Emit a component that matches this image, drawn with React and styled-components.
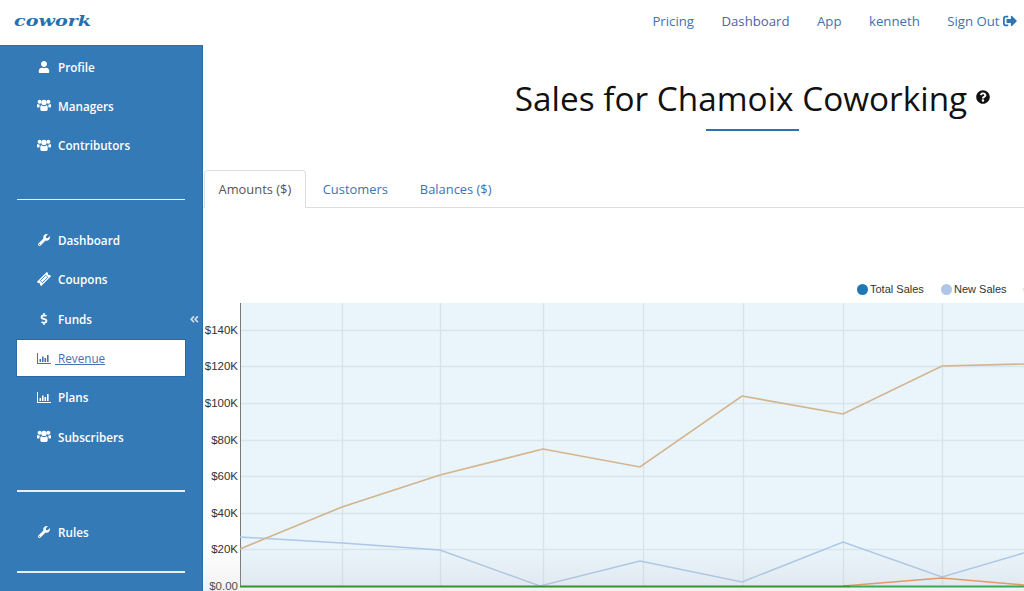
import React from "react";
import styled, { createGlobalStyle } from "styled-components";
import { FaUser, FaWrench, FaDollarSign, FaAngleDoubleLeft, FaQuestionCircle, FaSignOutAlt } from "react-icons/fa";

const Global = createGlobalStyle`
  html, body { margin: 0; padding: 0; background: #fff; height: 100%; overflow: hidden; }
  body { font-family: "Open Sans", "Liberation Sans", sans-serif; }
  #root { height: 100%; }
`;

const Page = styled.div`
  position: relative;
  width: 1024px;
  height: 591px;
  overflow: hidden;
  display: flex;
  flex-direction: column;
`;

const TopBar = styled.header`
  flex: 0 0 45px;
  display: flex;
  align-items: center;
  justify-content: space-between;
  padding: 0 7px 4px 14px;
  box-sizing: border-box;
`;

const Logo = styled.a`
  font-family: "DejaVu Serif", serif;
  font-weight: 700;
  font-style: italic;
  font-size: 14.5px;
  color: #256fb2;
  transform: scaleX(1.32);
  transform-origin: left center;
`;

const TopNav = styled.nav`
  display: flex;
  align-items: center;
  gap: 27.5px;
`;

const TopLink = styled.a`
  display: inline-flex;
  align-items: center;
  gap: 3.5px;
  font-size: 13.2px;
  color: ${(p) => (p.$visited ? "#56609f" : "#3e72b0")};
`;

const Body = styled.div`
  flex: 1;
  display: flex;
  min-height: 0;
`;

const Sidebar = styled.aside`
  position: relative;
  flex: 0 0 203px;
  box-sizing: border-box;
  background: #337ab7;
  border-right: 1px solid #2c6ca5;
  border-top: 1px solid #2e70aa;
  padding: 1px 17px 0;
`;

const Item = styled.a`
  height: ${(p) => (p.$active ? "36px" : "39.33px")};
  margin: ${(p) => (p.$active ? "1.6px 0" : "0")};
  box-sizing: border-box;
  display: flex;
  align-items: center;
  gap: ${(p) => (p.$active ? "4px" : "7px")};
  padding-left: 19px;
  font-size: 11.7px;
  font-weight: 600;
  color: ${(p) => (p.$active ? "#4a6fae" : "#fff")};
  background: ${(p) => (p.$active ? "#fff" : "transparent")};
  outline: ${(p) => (p.$active ? "1px solid #2a69a6" : "none")};
`;

const Label = styled.span`
  font-weight: ${(p) => (p.$active ? 400 : 600)};
  text-decoration: ${(p) => (p.$active ? "underline" : "none")};
  white-space: pre;
`;

const IconSlot = styled.span`
  flex: 0 0 15px;
  display: flex;
  align-items: center;
  justify-content: center;
  font-size: 12px;
`;

const Divider = styled.hr`
  border: 0;
  height: 1.5px;
  background: #e6eef6;
  margin: ${(p) => p.$top}px 0 ${(p) => p.$bottom}px;
`;

const Collapse = styled.span`
  position: absolute;
  right: 3px;
  top: 268px;
  color: #cfdfee;
  font-size: 10.5px;
  display: flex;
`;

const Main = styled.main`
  flex: 0 0 1099px;
  display: flex;
  flex-direction: column;
`;

const TitleRow = styled.div`
  flex: none;
  display: flex;
  justify-content: center;
  gap: 9px;
  padding-top: 28px;
`;

const Title = styled.h1`
  margin: 0;
  font-size: 33.35px;
  font-weight: 400;
  line-height: 50px;
  color: #111;
`;

const Help = styled.span`
  color: #111;
  font-size: 14px;
  display: flex;
  padding-top: 17px;
`;

const Rule = styled.div`
  flex: none;
  width: 93px;
  height: 2px;
  margin: 6px auto 0;
  background: #2b72b6;
`;

const Tabs = styled.div`
  flex: none;
  display: flex;
  margin-top: 39px;
  height: 38px;
  box-sizing: border-box;
  border-bottom: 1px solid #ddd;
  padding-left: 1px;
  gap: 2px;
`;

const Tab = styled.a`
  height: 38px;
  box-sizing: border-box;
  padding: 0 ${(p) => (p.$active ? "13.5px" : "15px")};
  display: flex;
  align-items: center;
  font-size: 12.9px;
  color: ${(p) => (p.$active ? "#555" : "#3e72b0")};
  background: ${(p) => (p.$active ? "#fff" : "transparent")};
  border: ${(p) => (p.$active ? "1px solid #ddd" : "0")};
  border-bottom-color: #fff;
  border-radius: 4px 4px 0 0;
`;

const Chart = styled.svg`
  flex: none;
  display: block;
  margin-top: 67px;
  width: 821px;
  height: 316px;
  font-family: "Liberation Sans", Arial, sans-serif;
`;

const Fade = styled.div`
  position: absolute;
  left: 203px;
  right: 0;
  bottom: 0;
  height: 42px;
  pointer-events: none;
  background: linear-gradient(to bottom, rgba(190, 190, 190, 0), rgba(190, 190, 190, 0.22));
`;

const BarsIcon = () => (
  <svg width="14" height="11" viewBox="0 0 14 11" fill="currentColor">
    <path d="M0 0h1v10h13v1H0z" />
    <path d="M2.5 6h1.6v3H2.500zM5 3.500h1.600V9H5zM7.500 5h1.600v4H7.500zM10 2h1.600v7H10z" />
  </svg>
);

const UsersIcon = () => (
  <svg width="14" height="13" viewBox="0 0 14 13" fill="currentColor">
    <circle cx="2.600" cy="2.800" r="2" />
    <circle cx="11.400" cy="2.800" r="2" />
    <circle cx="7" cy="3.400" r="2.700" />
    <path d="M0 5.800c0-.6.500-.9 1-.9.600.6 1.200.9 2 .9-.4.800-.6 1.500-.6 2.700H1C.300 8.500 0 8 0 7.400z" />
    <path d="M14 5.800c0-.6-.5-.9-1-.9-.6.6-1.200.9-2 .9.400.8.600 1.500.6 2.700H13c.7 0 1-.5 1-1.100z" />
    <path d="M3.300 8.200c0-1 .5-1.900 1.300-1.900.7.600 1.500 1 2.400 1s1.700-.4 2.400-1c.8 0 1.300.9 1.300 1.900v2.100c0 1-.7 1.600-1.600 1.600H4.900c-.9 0-1.600-.6-1.600-1.600z" />
  </svg>
);

const TicketIcon = () => (
  <svg width="14" height="14" viewBox="0 0 14 14">
    <g transform="rotate(-45 7 7)">
      <path fill="currentColor" d="M0 4h14v2a1 1 0 0 0 0 2v2H0V8a1 1 0 0 0 0-2z" />
      <rect x="3.200" y="5.600" width="7.600" height="2.800" fill="none" stroke="#337ab7" strokeWidth="0.800" />
    </g>
  </svg>
);

const groups = [
  [["Profile", <FaUser />], ["Managers", <UsersIcon />], ["Contributors", <UsersIcon />]],
  [["Dashboard", <FaWrench />], ["Coupons", <TicketIcon />], ["Funds", <FaDollarSign />], ["\u00a0Revenue", <BarsIcon />, true], ["Plans", <BarsIcon />], ["Subscribers", <UsersIcon />]],
  [["Rules", <FaWrench />]],
];
const dividers = [[34, 20], [34, 21], [19, 0]];

const yLabels = [["$140K", 330], ["$120K", 366], ["$100K", 403], ["$80K", 440], ["$60K", 476], ["$40K", 513], ["$20K", 549], ["$0.00", 586]];
const xGrid = [342, 440, 543, 643, 743, 843, 942];
const tan = "240,549 342,507 440,475 543,449 640,467 742,396 843,414 942,366 1024,364";
const blue = "240,537 342,543 440,550 540,586 640,561 742,582 843,542 942,577 1024,553";
const orange = "843,586 942,578 1024,585";

export default function App() {
  return (
    <Page>
      <Global />
      <TopBar>
        <Logo>cowork</Logo>
        <TopNav>
          <TopLink>Pricing</TopLink>
          <TopLink $visited>Dashboard</TopLink>
          <TopLink>App</TopLink>
          <TopLink>kenneth</TopLink>
          <TopLink>Sign Out<FaSignOutAlt size={14} color="#2f75b5" /></TopLink>
        </TopNav>
      </TopBar>
      <Body>
        <Sidebar>
          {groups.map((items, i) => (
            <React.Fragment key={i}>
              {items.map(([label, icon, active]) => (
                <Item key={label} $active={active}>
                  <IconSlot>{icon}</IconSlot>
                  <Label $active={active}>{label}</Label>
                </Item>
              ))}
              <Divider $top={dividers[i][0]} $bottom={dividers[i][1]} />
            </React.Fragment>
          ))}
          <Collapse><FaAngleDoubleLeft /></Collapse>
        </Sidebar>
        <Main>
          <TitleRow>
            <Title>Sales for Chamoix Coworking</Title>
            <Help><FaQuestionCircle /></Help>
          </TitleRow>
          <Rule />
          <Tabs>
            <Tab $active>Amounts ($)</Tab>
            <Tab>Customers</Tab>
            <Tab>Balances ($)</Tab>
          </Tabs>
          <Chart viewBox="203 275 821 316">
            <rect x="240" y="303" width="784" height="284" fill="#e9f4fb" />
            {yLabels.map(([, y]) => (
              <line key={y} x1="240" x2="1024" y1={y + 0.5} y2={y + 0.5} stroke="#d9e5ec" strokeWidth="1.300" />
            ))}
            {xGrid.map((x) => (
              <line key={x} x1={x + 0.5} x2={x + 0.5} y1="303" y2="587" stroke="#d6e3eb" strokeWidth="1.300" />
            ))}
            <line x1="240.500" x2="240.500" y1="303" y2="587" stroke="#777" />
            {yLabels.map(([t, y]) => (
              <text key={t} x="238" y={y + 3.500} textAnchor="end" fontSize="11.500" fill="#333">{t}</text>
            ))}
            <polyline points={blue} fill="none" stroke="#aec7e8" strokeWidth="1.500" />
            <polyline points={orange} fill="none" stroke="#e8935a" strokeWidth="1.600" />
            <polyline points={tan} fill="none" stroke="#d3b48c" strokeWidth="1.600" />
            <line x1="240" x2="850" y1="586.500" y2="586.500" stroke="#158a0c" strokeWidth="2" />
            <line x1="850" x2="1024" y1="586.500" y2="586.500" stroke="#1aa83c" strokeWidth="2" />
            <circle cx="862.500" cy="289.500" r="5.500" fill="#1f77b4" />
            <text x="870" y="293" fontSize="11" fill="#333">Total Sales</text>
            <circle cx="946.500" cy="289.500" r="5.500" fill="#aec7e8" />
            <text x="954" y="293" fontSize="11" fill="#333">New Sales</text>
            <circle cx="1029" cy="289.500" r="5.500" fill="#ffbb78" />
          </Chart>
        </Main>
      </Body>
      <Fade />
    </Page>
  );
}
